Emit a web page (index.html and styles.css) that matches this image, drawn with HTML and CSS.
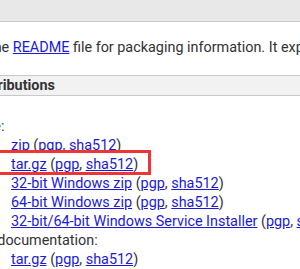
FILE: index.html
```html
<!DOCTYPE html>
<html lang="en">
<head>
    <meta charset="UTF-8">
    <title>Tomcat Download</title>
    <link rel="stylesheet" href="styles.css">
</head>
<body>
    <div class="topbar"></div>
    <div class="page">
        <p class="intro">Please see the <a href="#">README</a> file for packaging information. It explains what every distribution contains.</p>
        <h3 class="section"><span>Binary Distributions</span></h3>
        <ul class="dist">
            <li>Core:
                <ul>
                    <li><a href="#">zip</a> (<a href="#">pgp</a>, <a href="#">sha512</a>)</li>
                    <li><a href="#">tar.gz</a> (<a href="#">pgp</a>, <a href="#">sha512</a>)</li>
                    <li><a href="#">32-bit Windows zip</a> (<a href="#">pgp</a>, <a href="#">sha512</a>)</li>
                    <li><a href="#">64-bit Windows zip</a> (<a href="#">pgp</a>, <a href="#">sha512</a>)</li>
                    <li><a href="#">32-bit/64-bit Windows Service Installer</a> (<a href="#">pgp</a>, <a href="#">sha512</a>)</li>
                </ul>
            </li>
            <li>Full documentation:
                <ul>
                    <li><a href="#">tar.gz</a> (<a href="#">pgp</a>, <a href="#">sha512</a>)</li>
                </ul>
            </li>
        </ul>
    </div>
    <!-- annotation box drawn over the tar.gz row -->
    <div class="marker"></div>
</body>
</html>
```

FILE: styles.css
```css
body {
    margin: 0;
    padding: 0;
    font-family: Roboto, "Open Sans", sans-serif;
    font-size: 14.4px;
    line-height: 19px;
    color: #333;
    background-color: #fff;
    overflow: hidden;
    position: relative;
    width: 300px;
    height: 269px;
}

a {
    color: #1a1ad8;
    text-decoration: underline;
}

.topbar {
    height: 21px;
    background-color: #e8e8e8;
    border-bottom: 1px solid #c8c8c8;
}

.page {
    width: 800px;
    white-space: nowrap;
}

.intro {
    margin: 16px 0 0 -84px;
    padding: 0;
}

.section {
    margin: 18px 0 0 0;
    padding: 0;
    height: 19px;
    background-color: #f2f2f2;
    border-top: 1px solid #c8c8c8;
    border-bottom: 1px solid #c8c8c8;
    font-size: 14.4px;
    font-weight: bold;
    line-height: 19px;
}

.section span {
    margin-left: -73px;
}

.dist {
    list-style: none;
    margin: 21px 0 0 -29px;
    padding: 0;
}

.dist ul {
    list-style: none;
    margin: 0;
    padding: 0 0 0 40px;
}

.marker {
    position: absolute;
    left: -3px;
    top: 150px;
    width: 148px;
    height: 19px;
    border: 3px solid #ee3535;
}
```
